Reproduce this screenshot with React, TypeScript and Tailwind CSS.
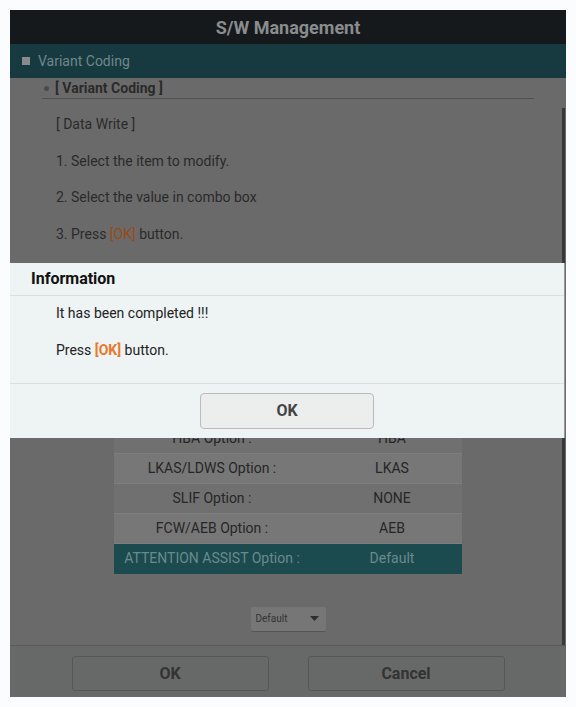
import React from 'react';

const rows = [
	{ label: 'HBA Option :', value: 'HBA' },
	{ label: 'LKAS/LDWS Option :', value: 'LKAS' },
	{ label: 'SLIF Option :', value: 'NONE' },
	{ label: 'FCW/AEB Option :', value: 'AEB' },
];

const steps = [
	'1. Select the item to modify.',
	'2. Select the value in combo box',
];

export default function App() {
	return (
		<div
			className="min-h-screen bg-[#fbfcfd] p-[10px]"
			style={{ fontFamily: 'Roboto, "Liberation Sans", sans-serif' }}
		>
			<div className="relative flex h-[687px] w-[556px] flex-col bg-[#6a6a6a]">
				{/* title */}
				<div className="flex h-[34px] items-center justify-center bg-[#15191b]">
					<span className="text-[18px] font-bold text-[#8a8c8d]">
						S/W Management
					</span>
				</div>

				{/* section bar */}
				<div className="flex h-[34px] items-center gap-[8px] bg-[#163a3f] pl-[12px]">
					<span className="h-[8px] w-[8px] bg-[#8a8a8a]" />
					<span className="text-[14px] text-[#70878a]">Variant Coding</span>
				</div>

				{/* content */}
				<div className="relative flex flex-1 flex-col">
					<div className="mx-[32px] flex h-[21px] items-center gap-[6px] border-b border-[#505050] pl-[2px]">
						<span className="h-[5px] w-[5px] rounded-full bg-[#4a4a4a]" />
						<span className="text-[14px] font-bold text-[#2a2a2a]">
							[ Variant Coding ]
						</span>
					</div>

					<div className="flex flex-col gap-[19.5px] pl-[46px] pt-[17px] text-[14px] text-[#2a2a2a]">
						<div className="h-[17px] leading-[17px]">[ Data Write ]</div>
						{steps.map(s => (
							<div key={s} className="h-[17px] leading-[17px]">
								{s}
							</div>
						))}
						<div className="h-[17px] leading-[17px]">
							3. Press <span className="text-[#9a4a14]">[OK]</span> button.
						</div>
					</div>

					<div className="ml-[104px] mt-[181px] flex w-[348px] flex-col">
						{rows.map((r, i) => (
							<div
								key={r.label}
								className={
									'flex h-[30px] items-center border-b border-[#7e7e7e] text-[14px] text-[#262626] ' +
									(i % 2 === 1 ? 'bg-[#777777]' : 'bg-[#707070]')
								}
							>
								<span className="w-[196px] text-center">{r.label}</span>
								<span className="flex-1 pl-[12px] text-center">{r.value}</span>
							</div>
						))}
						<div className="flex h-[30px] items-center bg-[#1b4a4f] text-[14px] text-[#6b8a8c]">
							<span className="w-[196px] text-center">ATTENTION ASSIST Option :</span>
							<span className="flex-1 pl-[12px] text-center">Default</span>
						</div>
					</div>

					<div className="mt-[33px] flex justify-center">
						<div className="flex h-[25px] w-[75px] items-center justify-between rounded-[2px] border-b border-[#555] bg-[#767676] px-[5px]">
							<span className="text-[10px] text-[#333]">Default</span>
							<svg width="9" height="5" viewBox="0 0 9 5" className="mr-[2px]">
								<path d="M0 0h9L4.5 5z" fill="#2d2d2d" />
							</svg>
						</div>
					</div>

					<div className="absolute right-[1px] top-[30px] h-[537px] w-[3px] bg-[#383838]" />
				</div>

				{/* footer */}
				<div className="flex h-[52px] items-start justify-center gap-[39px] border-t border-[#595959] bg-[#676968] pt-[10px]">
					<div className="flex h-[35px] w-[197px] items-center justify-center rounded-[3px] border border-[#565656] text-[16px] font-bold text-[#333]">
						OK
					</div>
					<div className="flex h-[35px] w-[197px] items-center justify-center rounded-[3px] border border-[#565656] text-[16px] font-bold text-[#333]">
						Cancel
					</div>
				</div>

				{/* information dialog */}
				<div className="absolute left-0 top-[253px] flex h-[175px] w-[555px] flex-col border-r border-[#9a9a9a] bg-[#eef3f4]">
					<div className="flex h-[33px] items-center border-b border-[#d9dedf] pl-[21px]">
						<span className="text-[16px] font-bold text-[#111]">Information</span>
					</div>
					<div className="flex h-[88px] flex-col gap-[20px] border-b border-[#d9dedf] pl-[46px] pt-[9px] text-[14px] text-[#222]">
						<div className="h-[17px] leading-[17px]">It has been completed !!!</div>
						<div className="h-[17px] leading-[17px]">
							Press <span className="font-bold text-[#e8782a]">[OK]</span> button.
						</div>
					</div>
					<div className="flex flex-1 items-center justify-center">
						<div className="flex h-[36px] w-[174px] items-center justify-center rounded-[4px] border border-[#b8bcbd] bg-[#eceeee] text-[16px] font-bold text-[#444]">
							OK
						</div>
					</div>
				</div>
			</div>
		</div>
	);
}
